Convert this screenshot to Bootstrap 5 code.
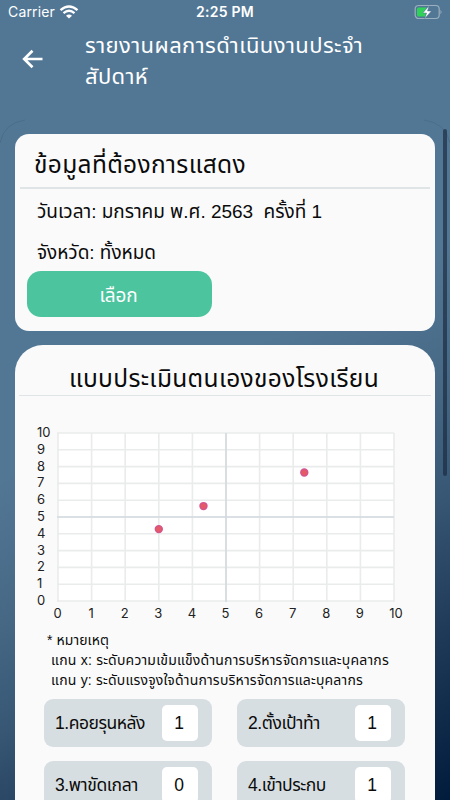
<!DOCTYPE html>
<html lang="th">
<head>
<meta charset="utf-8">
<meta name="viewport" content="width=device-width, initial-scale=1">
<title>รายงานผลการดำเนินงานประจำสัปดาห์</title>
<link href="https://cdn.jsdelivr.net/npm/bootstrap@5.3.0/dist/css/bootstrap.min.css" rel="stylesheet">
<style>
body{height:800px;overflow:hidden;color:#0b0b0b;font-family:"Liberation Sans","Noto Sans Thai","Noto Sans",sans-serif;background:linear-gradient(152deg,#527795 0,#527795 46%,#466885 60%,#365674 71%,#2b4866 77%,#1a3453 86.5%,#001b3c 100%)}
.screen{width:450px;height:800px}
.statusbar{height:24px;font-family:Inter,sans-serif;font-size:14px;line-height:24px}
.header{height:110px}
.header h1{font-size:22px;line-height:31px;font-weight:400;padding-top:6px;margin-left:42px}
.back{margin:25px 0 0 22px}
.panel{width:420px;background:#fafafa}
.p1{height:197px;border-radius:14px}
.p2{height:470px;border-radius:28px 28px 0 0;margin-top:14px}
.panel h2{font-size:24.5px;font-weight:400;white-space:nowrap}
.p1 h2{height:55px;line-height:62px;margin:0 5px 1px;padding-left:14px;border-bottom:2px solid #dfe4e7}
.p2 h2{height:51px;line-height:67px;margin:0 4px;padding-right:2px;border-bottom:1.5px solid #dfe4e7}
.info{font-size:19px;line-height:40.5px;padding:2px 0 0 22px;height:40.5px;white-space:pre}
.choose{width:185px;height:46px;margin-left:12px;border-radius:14px;background:#4cc49e;color:#fff;font-size:19px;line-height:49px;padding:0 2px 0 0}
.choose:hover{background:#4cc49e;color:#fff}
.notes{font-size:14px;line-height:20px;padding-left:32px;white-space:pre}
.cells{padding:9px 29px 0;column-gap:25px;row-gap:14px}
.cell{width:168px;height:48px;border-radius:9px;background:#d7dee1;padding:0 14px 0 11px;font-size:17.5px}
.num{width:36px;height:36px;line-height:36px;border-radius:5px;font-size:17.5px;padding-right:2px}
.chart text{font:13px Inter,sans-serif;fill:#222}
.scroller{left:443px;top:129px;width:4px;height:347px;background:rgba(24,40,60,.65);border-radius:2px}
.outline{left:0;top:119px}
.fit{display:inline-block;white-space:pre}
</style>
<script src="https://cdn.jsdelivr.net/npm/bootstrap@5.3.0/dist/js/bootstrap.bundle.min.js"></script>
</head>
<body>
<div class="screen position-relative overflow-hidden">
<div class="statusbar d-flex align-items-center justify-content-between text-white px-2 position-relative">
<div class="d-flex align-items-center gap-1"><span class="fit" data-w="47">Carrier</span>
<svg width="20" height="14" viewBox="0 0 20 14" fill="none" stroke="#fff" stroke-width="2.3"><path d="M1.5 5.2Q10-2.2 18.5 5.2M4.5 8.2Q10 3.3 15.5 8.2"/><path d="M7 10.8Q10 8.4 13 10.8L10 13.6Z" fill="#fff" stroke="none"/></svg></div>
<strong class="position-absolute start-50 translate-middle-x fw-semibold"><span class="fit" data-w="58">2:25 PM</span></strong>
<svg width="30" height="16" viewBox="0 0 30 16"><rect x="3.2" y="1.5" width="24" height="13" rx="3.5" fill="none" stroke="#9aafbf" stroke-width="1.2"/><path d="M28.5 5.7Q30.5 8 28.5 10.3Z" fill="#9aafbf"/><path d="M6.5 3.5h8L11 9h3l-1 3.5H6.5A1.5 1.5 0 0 1 5 11V5a1.5 1.5 0 0 1 1.5-1.5Z" fill="#30d158"/><path d="M17 1.8 10.8 9h3.8l-1.8 5.5L19.4 7h-3.9Z" fill="#fff" stroke="#527795" stroke-width=".5"/></svg>
</div>
<header class="header d-flex text-white">
<svg class="back flex-shrink-0" width="21" height="20" viewBox="0 0 21 20" fill="none" stroke="#fff" stroke-width="2.7"><path d="M20.5 10H3M10.5 1.7 2.2 10l8.3 8.3"/></svg>
<h1><span class="fit" data-w="278">รายงานผลการดำเนินงานประจำ</span><br><span class="fit" data-w="63">สัปดาห์</span></h1>
</header>
<main>
<section class="panel p1 mx-auto">
<h2><span class="fit" data-w="212">ข้อมูลที่ต้องการแสดง</span></h2>
<div class="info"><span class="fit" data-w="285">วันเวลา: มกราคม พ.ศ. 2563  ครั้งที่ 1</span></div>
<div class="info"><span class="fit" data-w="119">จังหวัด: ทั้งหมด</span></div>
<button class="btn choose border-0 d-block"><span class="fit" data-w="38">เลือก</span></button>
</section>
<section class="panel p2 mx-auto">
<h2 class="text-center mb-0"><span class="fit" data-w="310">แบบประเมินตนเองของโรงเรียน</span></h2>
<svg class="chart d-block" id="chart" width="420" height="234" viewBox="15 396 420 234"></svg>
<div class="notes"><span class="fit" data-w="62">* หมายเหตุ</span>
<span class="fit" data-w="342"> แกน x: ระดับความเข้มแข็งด้านการบริหารจัดการและบุคลากร</span>
<span class="fit" data-w="316"> แกน y: ระดับแรงจูงใจด้านการบริหารจัดการและบุคลากร</span></div>
<div class="cells d-flex flex-wrap">
<div class="cell d-flex align-items-center justify-content-between"><span class="fit" data-w="90">1.คอยรุนหลัง</span><span class="num bg-white text-center">1</span></div>
<div class="cell d-flex align-items-center justify-content-between"><span class="fit" data-w="72">2.ตั้งเป้าท้า</span><span class="num bg-white text-center">1</span></div>
<div class="cell d-flex align-items-center justify-content-between"><span class="fit" data-w="83">3.พาขัดเกลา</span><span class="num bg-white text-center">0</span></div>
<div class="cell d-flex align-items-center justify-content-between"><span class="fit" data-w="78">4.เข้าประกบ</span><span class="num bg-white text-center">1</span></div>
</div>
</section>
</main>
<svg class="outline position-absolute" width="450" height="30" fill="none" stroke="#446781" stroke-width=".6"><path d="M0 24Q4 4 25 1M424 1Q446 4 450 24"/></svg>
<div class="scroller position-absolute"></div>
</div>
<script>
// Scatter chart: both axes run from 0 to 10
const x = v => 58 + v * 33.6, y = v => 601 - v * 16.8;
let s = '<rect x="58" y="433" width="336" height="168" fill="#fff"/>';
for (let i = 0; i <= 10; i++) {
  s += `<path d="M${x(i)} 433V602M57 ${y(i)}H394" stroke="#eaebeb" stroke-width="1.6"/>`;
  s += `<text x="37" y="${y(i) + 4}">${i}</text><text x="${x(i) + (i === 10 ? 2 : -.5)}" y="618" text-anchor="middle">${i}</text>`;
}
s += `<path d="M${x(5)} 433V602M57 ${y(5)}H394" stroke="#d3dadf" stroke-width="1.6"/>`;
for (const [a, b] of [[3, 4.28], [4.33, 5.65], [7.33, 7.65]])
  s += `<circle cx="${x(a)}" cy="${y(b)}" r="3.4" fill="#e55a64" stroke="#d5558b" stroke-width="1.6"/>`;
document.getElementById('chart').innerHTML = s;
// Spread each label over its intended width
const seg = new Intl.Segmenter('th', {granularity: 'grapheme'});
document.querySelectorAll('.fit').forEach(e => {
  const n = [...seg.segment(e.textContent)].length, w = e.getBoundingClientRect().width;
  e.style.letterSpacing = (e.dataset.w - w) / n + 'px';
});
</script>
</body>
</html>
